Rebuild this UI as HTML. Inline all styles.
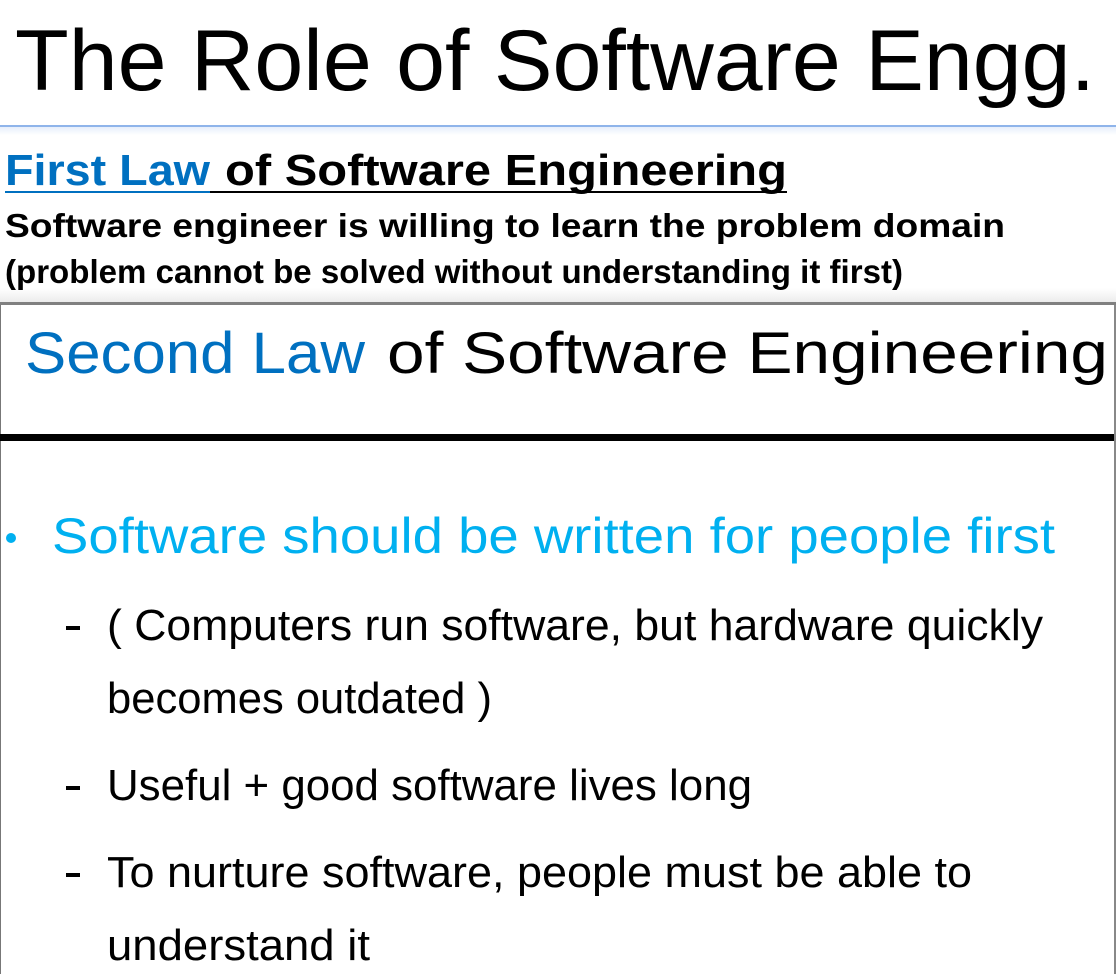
<!DOCTYPE html>
<html><head><meta charset="utf-8"><style>
html,body{margin:0;padding:0;background:#fff;width:1116px;height:974px;overflow:hidden}
svg{display:block}
text{font-family:"Comic Sans MS","Liberation Sans",sans-serif}
.b{font-family:"Liberation Sans",sans-serif;font-weight:bold}
</style></head><body>
<svg width="1116" height="974" viewBox="0 0 1116 974" xmlns="http://www.w3.org/2000/svg">
<defs>
<linearGradient id="g" x1="0" y1="0" x2="0" y2="1"><stop offset="0" stop-color="#e6eefb"/><stop offset="1" stop-color="#fff"/></linearGradient>
<linearGradient id="g2" x1="0" y1="0" x2="0" y2="1"><stop offset="0" stop-color="#fff"/><stop offset="1" stop-color="#ececec"/></linearGradient>
</defs>
<rect width="1116" height="974" fill="#fff"/>
<rect x="0" y="288" width="1116" height="14" fill="url(#g2)"/>
<text x="15" y="90" font-size="86" fill="#000" textLength="1080" lengthAdjust="spacingAndGlyphs">The Role of Software Engg.</text>
<rect x="0" y="125" width="1116" height="2" fill="#8fb4ea"/>
<rect x="0" y="127" width="1116" height="8" fill="url(#g)"/>
<text class="b" x="5" y="185" font-size="44" fill="#0070c0" textLength="205" lengthAdjust="spacingAndGlyphs">First Law</text>
<text class="b" x="225" y="185" font-size="44" fill="#000" textLength="562" lengthAdjust="spacingAndGlyphs">of Software Engineering</text>
<rect x="5" y="191" width="205" height="2" fill="#0070c0"/>
<rect x="210" y="191" width="577" height="2" fill="#000"/>
<text class="b" x="5" y="237" font-size="33" fill="#000" textLength="1000" lengthAdjust="spacingAndGlyphs">Software engineer is willing to learn the problem domain</text>
<text class="b" x="5" y="283" font-size="33" fill="#000" textLength="898" lengthAdjust="spacingAndGlyphs">(problem cannot be solved without understanding it first)</text>
<rect x="0" y="302" width="1116" height="3" fill="#808080"/>
<rect x="0" y="305" width="1" height="669" fill="#777"/>
<rect x="1114" y="305" width="2" height="669" fill="#888"/>
<text x="25" y="373" font-size="58" fill="#0070c0" textLength="340" lengthAdjust="spacingAndGlyphs">Second Law</text>
<text x="387" y="373" font-size="58" fill="#000" textLength="721" lengthAdjust="spacingAndGlyphs">of Software Engineering</text>
<rect x="0" y="434" width="1114" height="7" fill="#000"/>
<circle cx="11" cy="538" r="5" fill="#00b0f0"/>
<text x="52" y="553" font-size="50" fill="#00b0f0" textLength="1003" lengthAdjust="spacingAndGlyphs">Software should be written for people first</text>
<g fill="#000">
<rect x="66" y="626" width="14" height="4"/>
<rect x="66" y="786" width="14" height="4"/>
<rect x="66" y="873" width="14" height="4"/>
</g>
<text x="107" y="640" font-size="44" textLength="936" lengthAdjust="spacingAndGlyphs">( Computers run software, but hardware quickly</text>
<text x="107" y="713" font-size="44" textLength="385" lengthAdjust="spacingAndGlyphs">becomes outdated )</text>
<text x="107" y="800" font-size="44" textLength="645" lengthAdjust="spacingAndGlyphs">Useful + good software lives long</text>
<text x="107" y="887" font-size="44" textLength="865" lengthAdjust="spacingAndGlyphs">To nurture software, people must be able to</text>
<text x="107" y="960" font-size="44" textLength="263" lengthAdjust="spacingAndGlyphs">understand it</text>
</svg>
</body></html>
